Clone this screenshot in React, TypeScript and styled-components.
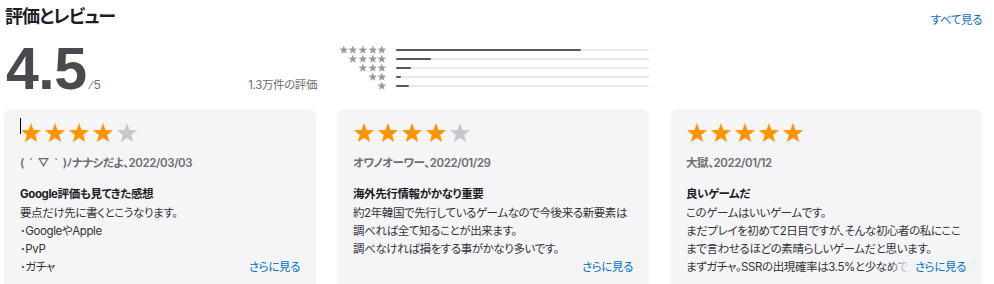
import styled, { createGlobalStyle } from "styled-components";

const FONT = `Inter, "Noto Sans CJK JP", sans-serif`;
const NUM_FONT = `"Liberation Sans", Inter, sans-serif`;

const STAR_POINTS =
  "12,1.1 14.82,8.72 22.94,9.05 16.57,14.08 18.76,21.9 12,17.4 5.24,21.9 7.43,14.08 1.06,9.05 9.18,8.72";

const histogram = [
  { stars: 5, pct: 73 },
  { stars: 4, pct: 14 },
  { stars: 3, pct: 6 },
  { stars: 2, pct: 2 },
  { stars: 1, pct: 5 },
];

const reviews = [
  {
    rating: 4,
    author: "(  ´  ▽  `  )ﾉナナシだよ、2022/03/03",
    title: "Google評価も見てきた感想",
    body: "要点だけ先に書くとこうなります。\n･GoogleやApple\n･PvP\n･ガチャ",
    caret: true,
  },
  {
    rating: 4,
    author: "オワノオーワー、2022/01/29",
    title: "海外先行情報がかなり重要",
    body: "約2年韓国で先行しているゲームなので今後来る新要素は\n調べれば全て知ることが出来ます。\n調べなければ損をする事がかなり多いです。",
    caret: false,
  },
  {
    rating: 5,
    author: "大獄、2022/01/12",
    title: "良いゲームだ",
    body: "このゲームはいいゲームです。\nまだプレイを初めて2日目ですが、そんな初心者の私にここ\nまで言わせるほどの素晴らしいゲームだと思います。\nまずガチャ。SSRの出現確率は3.5%と少なめで",
    caret: false,
  },
];

function Star({ size, color }: { size: number; color: string }) {
  return (
    <svg width={size} height={size} viewBox="0 0 24 24">
      <polygon points={STAR_POINTS} fill={color} />
    </svg>
  );
}

function App() {
  return (
    <>
      <GlobalStyle />
      <Page>
        <Header>
          <Title>評価とレビュー</Title>
          <SeeAll>すべて見る</SeeAll>
        </Header>
        <Summary>
          <Score>
            <Big>4.5</Big>
            <OutOf>∕5</OutOf>
            <Count>1.3万件の評価</Count>
          </Score>
          <Histogram>
            {histogram.map((row) => (
              <HistRow key={row.stars}>
                <MiniStars>
                  {Array.from({ length: row.stars }).map((_, i) => (
                    <Star key={i} size={10} color="#9b9b9f" />
                  ))}
                </MiniStars>
                <Track>
                  <Fill style={{ width: `${row.pct}%` }} />
                </Track>
              </HistRow>
            ))}
          </Histogram>
        </Summary>
        <Cards>
          {reviews.map((r) => (
            <Card key={r.author}>
              {r.caret && <Caret />}
              <Stars>
                {[0, 1, 2, 3, 4].map((i) => (
                  <Star key={i} size={22} color={i < r.rating ? "#ff9500" : "#c7c7cc"} />
                ))}
              </Stars>
              <Author>{r.author}</Author>
              <ReviewTitle>{r.title}</ReviewTitle>
              <Body>
                {r.body}
                <More>さらに見る</More>
              </Body>
            </Card>
          ))}
        </Cards>
      </Page>
    </>
  );
}

const GlobalStyle = createGlobalStyle`
  html, body {
    margin: 0;
    padding: 0;
    background: #ffffff;
  }

  body {
    font-family: ${FONT};
    font-size: 11.5px;
    letter-spacing: -0.4px;
    font-feature-settings: "palt";
    color: #1d1d1f;
    -webkit-font-smoothing: antialiased;
  }
`;

const Page = styled.section`
  width: 978px;
  height: 284px;
  padding: 0 12px 0 4px;
  overflow: hidden;
`;

const Header = styled.header`
  display: flex;
  justify-content: space-between;
  align-items: flex-start;
  box-sizing: border-box;
  height: 40px;
  padding-top: 6px;
`;

const Title = styled.h2`
  margin: 0 0 0 1px;
  font-size: 18px;
  line-height: 22px;
  letter-spacing: -1px;
  font-weight: 700;
  color: #1d1d1f;
`;

const SeeAll = styled.a`
  margin-top: 5px;
  line-height: 18px;
  color: #0070c9;
  cursor: pointer;
`;

const Summary = styled.div`
  display: grid;
  grid-template-columns: repeat(3, 312px);
  column-gap: 21px;
  height: 58px;
`;

const Score = styled.div`
  display: flex;
  align-items: baseline;
`;

const Big = styled.span`
  margin-left: 2px;
  font-family: ${NUM_FONT};
  font-size: 59px;
  line-height: 58px;
  font-weight: 700;
  letter-spacing: -0.5px;
  color: #4a4a4e;
`;

const OutOf = styled.span`
  margin-left: 4px;
  font-family: ${NUM_FONT};
  font-size: 12px;
  letter-spacing: 1.5px;
  color: #6e6e73;
`;

const Count = styled.span`
  margin-left: auto;
  margin-right: -1px;
  color: #6e6e73;
`;

const Histogram = styled.div`
  display: flex;
  flex-direction: column;
  padding-top: 5px;
`;

const HistRow = styled.div`
  display: flex;
  align-items: center;
  height: 9px;
`;

const MiniStars = styled.div`
  display: flex;
  justify-content: flex-end;
  width: 50px;
  margin-right: 9px;

  & > svg {
    width: 9.7px;
    height: 9.7px;
  }
`;

const Track = styled.div`
  flex: 1;
  height: 2px;
  margin-top: 1px;
  background: #e8e8ed;
  border-radius: 1px;
`;

const Fill = styled.div`
  height: 100%;
  background: #58585c;
  border-radius: 1px;
`;

const Cards = styled.div`
  display: grid;
  grid-template-columns: repeat(3, 312px);
  column-gap: 21px;
  margin-top: 11px;
`;

const Card = styled.article`
  position: relative;
  box-sizing: border-box;
  height: 200px;
  padding: 13px 16px 0;
  background: #f5f5f7;
  border-radius: 8px;
`;

const Caret = styled.span`
  position: absolute;
  left: 16px;
  top: 9px;
  width: 1px;
  height: 16px;
  background: #000000;
`;

const Stars = styled.div`
  display: flex;
  gap: 2px;
  height: 22px;
`;

const Author = styled.div`
  margin-top: 10px;
  line-height: 18px;
  font-weight: 600;
  color: #6e6e73;
  white-space: pre;
`;

const ReviewTitle = styled.h3`
  margin: 13px 0 0;
  font-size: 11.5px;
  line-height: 19px;
  font-weight: 700;
  color: #1d1d1f;
`;

const Body = styled.p`
  position: relative;
  margin: 0;
  height: 72px;
  line-height: 18px;
  color: #333336;
  white-space: pre;
`;

const More = styled.a`
  position: absolute;
  right: 0;
  bottom: 0;
  padding-left: 28px;
  color: #0070c9;
  background: linear-gradient(to right, rgba(245, 245, 247, 0) 0, #f5f5f7 24px);
  cursor: pointer;
`;

export default App;
